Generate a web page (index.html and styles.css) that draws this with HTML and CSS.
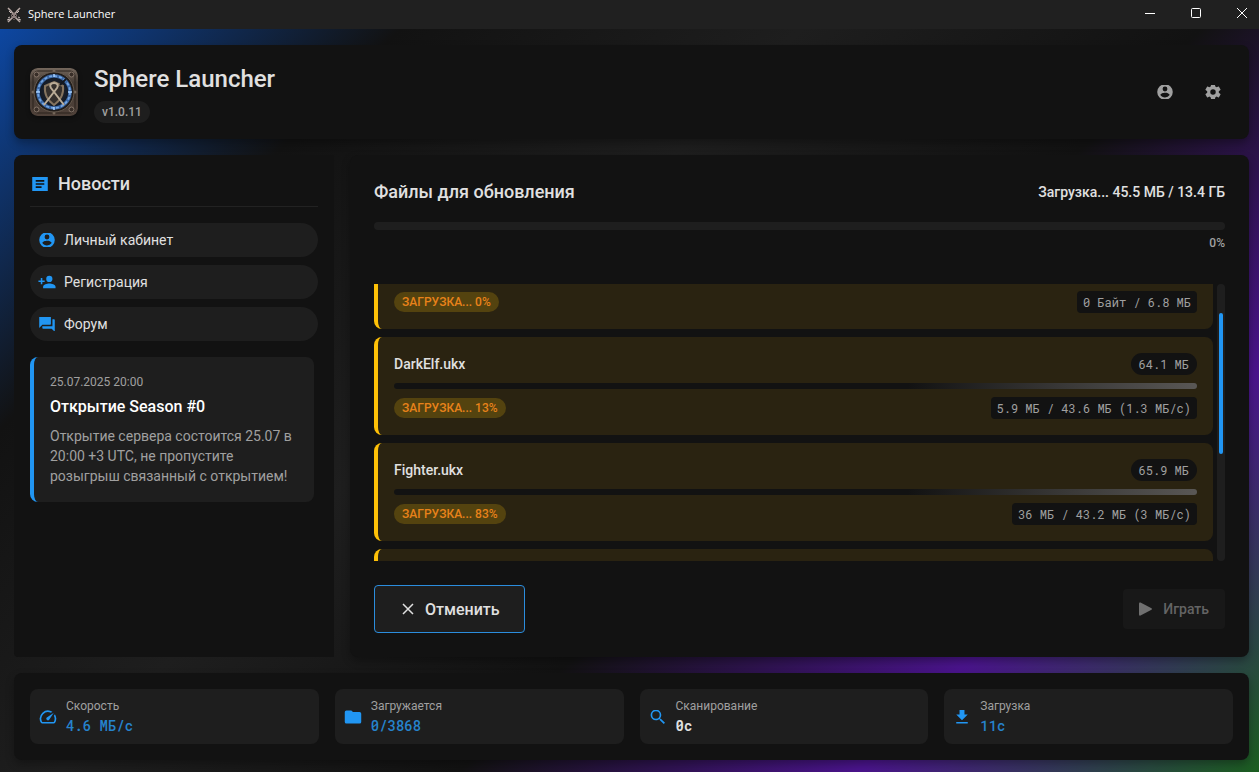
FILE: index.html
```html
<!DOCTYPE html>
<html lang="ru">
<head>
<meta charset="utf-8">
<meta name="viewport" content="width=device-width, initial-scale=1">
<title>Sphere Launcher</title>
<link rel="stylesheet" href="styles.css">
</head>
<body>
<div class="titlebar">
  <svg class="titlebar-icon" viewBox="0 0 16 16" aria-hidden="true">
    <path d="M2 1l3 3 5 7 4 4M14 1l-3 3-5 7-4 4" fill="none" stroke="#b9aaa6" stroke-width="1.500"/>
    <path d="M5 8l3-3 3 3-1 3-2 2-2-2z" fill="#8d7f7d"/>
    <path d="M1 13l3-1M15 13l-3-1M4 10l-2 1M12 10l2 1M3 4l2 2M13 4l-2 2" fill="none" stroke="#cabdba" stroke-width="1"/>
    <path d="M6 8h1v1H6zM9 8h1v1H9zM7 11h2v1H7z" fill="#2a2222"/>
  </svg>
  <span class="titlebar-name">Sphere Launcher</span>
  <button class="win-btn" aria-label="Свернуть"><svg viewBox="0 0 12 12"><path d="M1 6.500h10"/></svg></button>
  <button class="win-btn" aria-label="Развернуть"><svg viewBox="0 0 12 12"><rect x="1.500" y="1.500" width="9" height="9" rx="1"/></svg></button>
  <button class="win-btn" aria-label="Закрыть"><svg viewBox="0 0 12 12"><path d="M1 1l10 10M11 1L1 11"/></svg></button>
</div>

<div class="app">
  <header class="panel header">
    <svg class="logo" viewBox="0 0 48 48" aria-hidden="true">
      <defs>
        <linearGradient id="stone" x1="0" y1="0" x2="0" y2="1"><stop offset="0" stop-color="#74675c"/><stop offset=".3" stop-color="#463c35"/><stop offset="1" stop-color="#4f4139"/></linearGradient>
        <radialGradient id="core"><stop offset="0" stop-color="#3c3a3b"/><stop offset=".6" stop-color="#1c2028"/><stop offset="1" stop-color="#0e1828"/></radialGradient>
      </defs>
      <rect width="48" height="48" rx="7" fill="url(#stone)"/>
      <rect x="3" y="3" width="42" height="42" rx="5" fill="none" stroke="#2a221d" stroke-width="1"/>
      <g fill="#382e28" stroke="#85766a" stroke-width="1"><circle cx="6.500" cy="6.500" r="2.500"/><circle cx="41.500" cy="6.500" r="2.500"/><circle cx="6.500" cy="41.500" r="2.500"/><circle cx="41.500" cy="41.500" r="2.500"/></g>
      <g fill="#75675a"><circle cx="24" cy="3" r="1.500"/><circle cx="24" cy="45" r="1.500"/><circle cx="3" cy="24" r="1.500"/><circle cx="45" cy="24" r="1.500"/></g>
      <circle cx="24" cy="24" r="20" fill="#211d1b" stroke="#66594d" stroke-width="1"/>
      <circle cx="24" cy="24" r="16" fill="url(#core)" stroke="#3a66a3" stroke-width="3.500"/>
      <circle cx="24" cy="24" r="16" fill="none" stroke="#74a5e0" stroke-width="1.800" stroke-dasharray="3 2"/>
      <path d="M24 6v3M24 39v3M6 24h4M38 24h4" stroke="#a9d2ff" stroke-width="1.500"/>
      <path d="M24 14l9 4c1 8-3 15-9 19-6-4-10-11-9-19z" fill="#35302d" stroke="#85745f" stroke-width="2"/>
      <path d="M36 11l-6 6" stroke="#14181f" stroke-width="2"/>
      <path d="M14 37l13-17c2-3 0-5-3-5s-5 2-3 5l13 17" fill="none" stroke="#b9ab96" stroke-width="2"/>
    </svg>
    <div class="brand">
      <h1>Sphere Launcher</h1>
      <span class="version">v1.0.11</span>
    </div>
    <button class="icon-btn" aria-label="Профиль"><svg class="icon" viewBox="0 3 24 18"><path d="M12 2a10 10 0 1 0 0 20 10 10 0 0 0 0-20zm0 3a3 3 0 1 1 0 6.200A3 3 0 0 1 12 5zm0 14.200c-2.500 0-4.700-1.300-6-3.200 0-2 4-3.100 6-3.100s6 1.100 6 3.100a7.200 7.200 0 0 1-6 3.200z"/></svg></button>
    <button class="icon-btn" aria-label="Настройки"><svg class="icon" viewBox="0 3 24 18"><path d="M12 15.500A3.500 3.500 0 1 1 12 8.500a3.500 3.500 0 0 1 0 7zM19.430 12.970c.04-.32.07-.64.07-.97s-.03-.66-.07-1l2.110-1.630c.19-.15.24-.42.12-.64l-2-3.460c-.12-.22-.39-.31-.61-.22l-2.490 1c-.52-.39-1.060-.73-1.690-.98l-.37-2.650C14.460 2.180 14.250 2 14 2h-4c-.25 0-.46.18-.5.42l-.37 2.650c-.63.25-1.170.59-1.690.98l-2.490-1c-.22-.09-.49 0-.61.22l-2 3.460c-.13.22-.07.49.12.64L4.570 11c-.04.34-.07.67-.07 1s.03.65.07.97l-2.110 1.660c-.19.15-.25.42-.12.64l2 3.460c.12.22.39.3.61.22l2.490-1.010c.52.4 1.060.74 1.690.99l.37 2.650c.04.24.25.42.5.42h4c.25 0 .46-.18.5-.42l.37-2.650c.63-.26 1.170-.59 1.690-.99l2.490 1.010c.22.08.49 0 .61-.22l2-3.460c.12-.22.07-.49-.12-.64z"/></svg></button>
  </header>

  <main class="content">
    <aside class="panel sidebar">
      <h2 class="side-title"><svg class="icon" viewBox="0 3 24 18"><path d="M2 3h20v18H2zM6.500 7v2h11V7zm0 4v2h11v-2zm0 4v2H14v-2z" fill-rule="evenodd"/></svg>Новости</h2>
      <nav class="links">
        <button class="link"><svg class="icon" viewBox="0 3 24 18"><path d="M12 2a10 10 0 1 0 0 20 10 10 0 0 0 0-20zm0 3a3 3 0 1 1 0 6.200A3 3 0 0 1 12 5zm0 14.200c-2.500 0-4.700-1.300-6-3.200 0-2 4-3.100 6-3.100s6 1.100 6 3.100a7.200 7.200 0 0 1-6 3.200z"/></svg>Личный кабинет</button>
        <button class="link"><svg class="icon" viewBox="0 3 24 18"><path d="M15 14c-2.670 0-8 1.330-8 4v2h16v-2c0-2.670-5.330-4-8-4zM6 10V7H4v3H1v2h3v3h2v-3h3v-2zM15 12a4 4 0 1 0 0-8 4 4 0 0 0 0 8z"/></svg>Регистрация</button>
        <button class="link"><svg class="icon" viewBox="0 3 24 18"><path d="M17 12V3a1 1 0 0 0-1-1H3a1 1 0 0 0-1 1v14l4-4h10a1 1 0 0 0 1-1zM21 6h-2v9H6v2a1 1 0 0 0 1 1h11l4 4V7a1 1 0 0 0-1-1z"/></svg>Форум</button>
      </nav>
      <article class="news">
        <time class="news-date">25.07.2025 20:00</time>
        <h3>Открытие Season #0</h3>
        <p>Открытие сервера состоится 25.07 в 20:00 +3 UTC, не пропустите розыгрыш связанный с открытием!</p>
      </article>
    </aside>

    <section class="panel updates">
      <div class="row updates-head">
        <h2>Файлы для обновления</h2>
        <span class="total">Загрузка... 45.5 МБ / 13.4 ГБ</span>
      </div>
      <div class="total-bar"></div>
      <div class="percent">0%</div>

      <div class="scroller">
        <ul class="files">
          <li class="file file-above">
            <div class="row"><span class="badge">Загрузка... 0%</span><span class="mono chip">0 Байт / 6.8 МБ</span></div>
          </li>
          <li class="file">
            <div class="row"><span class="file-name">DarkElf.ukx</span><span class="mono chip chip-round">64.1 МБ</span></div>
            <div class="file-bar"></div>
            <div class="row"><span class="badge">Загрузка... 13%</span><span class="mono chip">5.9 МБ / 43.6 МБ (1.3 МБ/с)</span></div>
          </li>
          <li class="file">
            <div class="row"><span class="file-name">Fighter.ukx</span><span class="mono chip chip-round">65.9 МБ</span></div>
            <div class="file-bar"></div>
            <div class="row"><span class="badge">Загрузка... 83%</span><span class="mono chip">36 МБ / 43.2 МБ (3 МБ/с)</span></div>
          </li>
          <li class="file file-below"></li>
        </ul>
        <div class="track"><div class="thumb"></div></div>
      </div>

      <div class="row actions">
        <button class="cancel"><svg viewBox="0 0 12 12"><path d="M1 1l10 10M11 1L1 11"/></svg>Отменить</button>
        <button class="play" disabled><svg viewBox="0 0 14 14"><path d="M0 1.500Q0 0 1.500.500L12.500 6.200q1 .8 0 1.600L1.500 13.500Q0 14 0 12.500z"/></svg>Играть</button>
      </div>
    </section>
  </main>

  <footer class="panel stats">
    <div class="stat"><svg class="icon" viewBox="0 3.500 24 17"><path d="M20.380 8.570l-1.230 1.850a8 8 0 0 1-.22 7.580H5.070A8 8 0 0 1 15.580 6.850l1.850-1.230A10 10 0 0 0 3.350 19a2 2 0 0 0 1.720 1h13.850a2 2 0 0 0 1.740-1 10 10 0 0 0-.27-10.440zm-9.790 6.840a2 2 0 0 0 2.830 0l5.660-8.490-8.490 5.660a2 2 0 0 0 0 2.830z"/></svg><div><div class="stat-label">Скорость</div><div class="mono stat-value">4.6 МБ/с</div></div></div>
    <div class="stat"><svg class="icon" viewBox="0 3.500 24 17"><path d="M10 4H4a2 2 0 0 0-2 2v12a2 2 0 0 0 2 2h16a2 2 0 0 0 2-2V8a2 2 0 0 0-2-2h-8z"/></svg><div><div class="stat-label">Загружается</div><div class="mono stat-value">0/3868</div></div></div>
    <div class="stat"><svg class="icon" viewBox="0 3.500 24 17"><path d="M15.500 14h-.79l-.28-.27A6.470 6.470 0 0 0 16 9.500 6.500 6.500 0 1 0 9.500 16c1.610 0 3.090-.59 4.230-1.570l.27.28v.79l5 4.990L20.490 19zm-6 0a4.500 4.500 0 1 1 0-9 4.500 4.500 0 0 1 0 9z"/></svg><div><div class="stat-label">Сканирование</div><div class="mono stat-value stat-plain">0с</div></div></div>
    <div class="stat"><svg class="icon" viewBox="0 3.500 24 17"><path d="M5 20h14v-2H5zM19 9h-4V3H9v6H5l7 7z"/></svg><div><div class="stat-label">Загрузка</div><div class="mono stat-value">11с</div></div></div>
  </footer>
</div>
</body>
</html>
```
FILE: styles.css
```css
* { box-sizing: border-box; }

body {
  margin: 0;
  height: 100vh;
  display: flex;
  flex-direction: column;
  background: #121212;
  color: #e0e0e0;
  font-family: Roboto, "Liberation Sans", sans-serif;
  font-size: 14px;
}

h1, h2, h3, p, ul { margin: 0; padding: 0; }
button { border: 0; background: none; color: inherit; font: inherit; padding: 0; }
svg { display: block; flex: none; }
.icon { width: 20px; height: 14px; fill: #2196f3; }
.mono { font-family: "Roboto Mono", "DejaVu Sans Mono", "Liberation Mono", monospace; }
.row { display: flex; align-items: center; justify-content: space-between; }

.titlebar {
  display: flex;
  align-items: center;
  height: 29px;
  flex: none;
  padding-left: 6px;
  background: #202020;
  font: 11px/16px "Open Sans", "Noto Sans", sans-serif;
  color: #fff;
}
.titlebar-icon { width: 16px; height: 16px; margin-right: 6px; }
.titlebar-name { flex: 1; padding-bottom: 2px; }
.win-btn { width: 46px; height: 26px; display: flex; align-items: center; justify-content: center; align-self: flex-start; }
.win-btn:last-child { width: 40px; padding-left: 6px; }
.win-btn svg { width: 12px; height: 12px; fill: none; stroke: #fff; stroke-width: 1; }

.app {
  flex: 1;
  min-height: 0;
  display: flex;
  flex-direction: column;
  gap: 16px;
  padding: 16px 10px 12px 14px;
  background: linear-gradient(135deg, #0d47a1 0%, #121212 20%, #1e1e1e 40%, #121212 60%, #4a148c 80%, #1b5e20 100%);
}
.panel {
  background: #121212;
  border-radius: 8px;
  box-shadow: 0 4px 8px rgba(0, 0, 0, .3);
}

.header { display: flex; align-items: center; padding: 16px; }
.logo { width: 48px; height: 48px; margin-right: 16px; border-radius: 8px; box-shadow: 0 2px 4px rgba(0, 0, 0, .4); }
.brand { flex: 1; display: flex; flex-direction: column; align-items: flex-start; gap: 4px; }
h1 { font-size: 24px; line-height: 36px; font-weight: 500; }
.version { padding: 0 8px; border-radius: 11px; background: #1e1e1e; color: #a0a0a0; font-size: 12px; line-height: 22px; font-weight: 500; }
.icon-btn { width: 40px; height: 40px; margin-left: 8px; display: flex; align-items: center; justify-content: center; }
.icon-btn .icon { fill: #a0a0a0; }

.content { flex: 1; min-height: 0; display: flex; gap: 16px; }
.sidebar { width: 320px; flex: none; padding: 16px; border-radius: 8px 0 0 4px; box-shadow: none; }
.side-title {
  display: flex;
  align-items: center;
  gap: 8px;
  padding-bottom: 10px;
  border-bottom: 1px solid #222;
  margin-bottom: 16px;
  font-size: 18px;
  line-height: 25px;
  font-weight: 500;
}
.links { display: flex; flex-direction: column; gap: 8px; margin-bottom: 16px; }
.link { display: flex; align-items: center; gap: 7px; height: 34px; padding: 0 7px; border-radius: 17px; background: #1e1e1e; font-weight: 400; }
.news { margin-right: 4px; padding: 16px; border-left: 4px solid #2196f3; border-radius: 8px; background: #1e1e1e; }
.news-date { display: block; font-size: 12px; line-height: 18px; color: #a0a0a0; margin-bottom: 5px; }
.news h3 { font-size: 16px; line-height: 22px; font-weight: 500; color: #fff; margin-bottom: 8px; }
.news p { line-height: 20px; color: #a0a0a0; }

.updates { flex: 1; min-width: 0; display: flex; flex-direction: column; padding: 24px; }
.updates-head { margin-bottom: 18px; }
.updates h2 { font-size: 18px; line-height: 25px; font-weight: 500; }
.total { font-weight: 500; }
.total-bar { height: 8px; border-radius: 4px; background: #1e1e1e; margin-bottom: 4px; flex: none; }
.percent { text-align: right; font-size: 12px; line-height: 18px; font-weight: 500; color: #a0a0a0; margin-bottom: 32px; }

.scroller { flex: 1; min-height: 0; display: flex; gap: 4px; margin-bottom: 24px; }
.files { flex: 1; min-width: 0; display: flex; flex-direction: column; gap: 8px; overflow: hidden; list-style: none; }
.file {
  flex: none;
  padding: 16px;
  border-left: 4px solid #ffc107;
  border-radius: 8px;
  background: #2a2311;
}
.file-above { padding-top: 7px; border-top-left-radius: 0; border-top-right-radius: 0; }
.file-below { flex: 1; padding: 0; border-bottom-left-radius: 0; border-bottom-right-radius: 0; }
.file-name { font-weight: 500; }
.chip { padding: 0 6px; border-radius: 4px; background: #121212; color: #a0a0a0; font-size: 12px; line-height: 22px; }
.chip-round { padding: 0 8px; border-radius: 11px; }
.badge { padding: 0 8px; border-radius: 10px; background: #54430f; color: #e8821a; font-size: 12px; line-height: 20px; font-weight: 500; text-transform: uppercase; }
.file-bar { height: 6px; margin: 8px 0; border-radius: 3px; background: linear-gradient(90deg, #121212 64%, #3a3938 84%, #595755 100%); }
.track { width: 8px; padding: 29px 0 0 2px; border-radius: 4px; background: #1e1e1e; }
.thumb { width: 4px; height: 141px; border-radius: 2px; background: #2196f3; }

.cancel, .play { display: flex; align-items: center; font-weight: 500; border-radius: 4px; background: #1e1e1e; }
.cancel { height: 48px; gap: 11px; padding: 0 24px 0 27px; border: 1px solid #2b8ddd; font-size: 16px; }
.cancel svg { width: 12px; height: 12px; fill: none; stroke: #e0e0e0; stroke-width: 1.500; }
.play { height: 40px; gap: 10px; padding: 0 16px; background: #181818; color: #646464; }
.play svg { width: 14px; height: 14px; fill: #707070; }

.stats { display: grid; grid-template-columns: repeat(4, 1fr); gap: 16px; padding: 16px; }
.stat { display: flex; align-items: center; gap: 8px; height: 55px; padding: 0 8px; border-radius: 8px; background: #1e1e1e; }
.stat-label { font-size: 12px; line-height: 18px; color: #a0a0a0; }
.stat-value { font-size: 14px; line-height: 22px; font-weight: 500; color: #2683cc; }
.stat-plain { font-weight: 700; color: #e0e0e0; }
```
